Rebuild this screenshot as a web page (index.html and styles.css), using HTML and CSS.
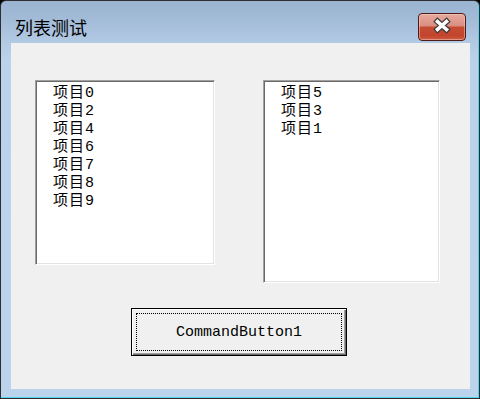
FILE: index.html
```html
<!DOCTYPE html>
<html lang="zh-CN">
<head>
<meta charset="utf-8">
<title>列表测试</title>
<link rel="stylesheet" href="styles.css">
</head>
<body>
<div class="window">
  <div class="titlebar">
    <span class="title">列表测试</span>
    <div class="close-btn">
      <svg width="48" height="28" viewBox="0 0 48 28">
        <path d="M19.5 8.5 L28.5 16.5 M28.5 8.5 L19.5 16.5" stroke="#3c3c3c" stroke-width="6" stroke-linecap="square" fill="none"/>
        <path d="M19.5 8.5 L28.5 16.5 M28.5 8.5 L19.5 16.5" stroke="#ffffff" stroke-width="3.6" stroke-linecap="square" fill="none"/>
      </svg>
    </div>
  </div>
  <div class="client">
    <div class="lists">
      <div class="listbox left-list">
        <div class="item">项目0</div>
        <div class="item">项目2</div>
        <div class="item">项目4</div>
        <div class="item">项目6</div>
        <div class="item">项目7</div>
        <div class="item">项目8</div>
        <div class="item">项目9</div>
      </div>
      <div class="listbox right-list">
        <div class="item">项目5</div>
        <div class="item">项目3</div>
        <div class="item">项目1</div>
      </div>
    </div>
    <div class="cmd-button"><span class="focus">CommandButton1</span></div>
  </div>
</div>
</body>
</html>
```
FILE: styles.css
```css
html, body {
  margin: 0;
  padding: 0;
  background: #000;
}
body {
  width: 480px;
  height: 399px;
  overflow: hidden;
}
.window {
  box-sizing: border-box;
  width: 480px;
  height: 399px;
  border: 1px solid #2e2e2e;
  border-radius: 6px 6px 0 0;
  padding: 0 9px 9px 10px;
  background: linear-gradient(to bottom, #9ab4d1 0px, #a2bbd7 18px, #b3cae4 42px, #bad2ec 60px, #bbd3ed 100%);
  box-shadow: inset -1px -1px 0 #4fd5f2;
  display: flex;
  flex-direction: column;
}
.titlebar {
  height: 42px;
  margin: 0 -9px 0 -10px;
  display: flex;
  align-items: flex-start;
  justify-content: space-between;
}
.title {
  font-family: "Noto Sans CJK SC", sans-serif;
  font-size: 18px;
  line-height: 24px;
  color: #000;
  margin: 14px 0 0 14px;
}
.close-btn {
  box-sizing: border-box;
  width: 48px;
  height: 28px;
  margin: 12px 13px 0 0;
  border: 1px solid #4e1a16;
  border-radius: 4px;
  background: linear-gradient(to bottom, #e6aa9e 0px, #da8e80 12px, #c54c33 13px, #c2452c 22px, #cf6048 100%);
  box-shadow: inset 0 0 0 1px rgba(255, 220, 210, 0.45);
  position: relative;
}
.close-btn svg {
  position: absolute;
  left: -1px;
  top: -1px;
}
.client {
  flex: 1;
  background: #f0f0f0;
  padding: 37px 0 0 24px;
}
.lists {
  display: flex;
  align-items: flex-start;
  gap: 48px;
}
.listbox {
  box-sizing: border-box;
  background: #fff;
  border: 1px solid;
  border-color: #a0a0a0 #ffffff #ffffff #a0a0a0;
  box-shadow: inset 1px 1px 0 #696969, inset -1px -1px 0 #e3e3e3;
  padding: 4px 0 0 17px;
}
.left-list {
  width: 180px;
  height: 185px;
}
.right-list {
  width: 177px;
  height: 203px;
}
.item {
  font-family: "Liberation Mono", "Noto Sans CJK SC", monospace;
  font-size: 15px;
  line-height: 18px;
  letter-spacing: 1px;
  color: #000;
  white-space: nowrap;
}
.cmd-button {
  box-sizing: border-box;
  width: 216px;
  height: 48px;
  margin: 25px 0 0 96px;
  border: 1px solid #000;
  background: #f0f0f0;
  box-shadow: inset 1px 1px 0 #ffffff, inset -1px -1px 0 #696969, inset -2px -2px 0 #a0a0a0;
  padding: 4px;
  display: flex;
}
.focus {
  flex: 1;
  border: 1px dotted #000;
  display: flex;
  align-items: center;
  justify-content: center;
  font-family: "Liberation Mono", monospace;
  font-size: 15px;
  color: #000;
}
```
